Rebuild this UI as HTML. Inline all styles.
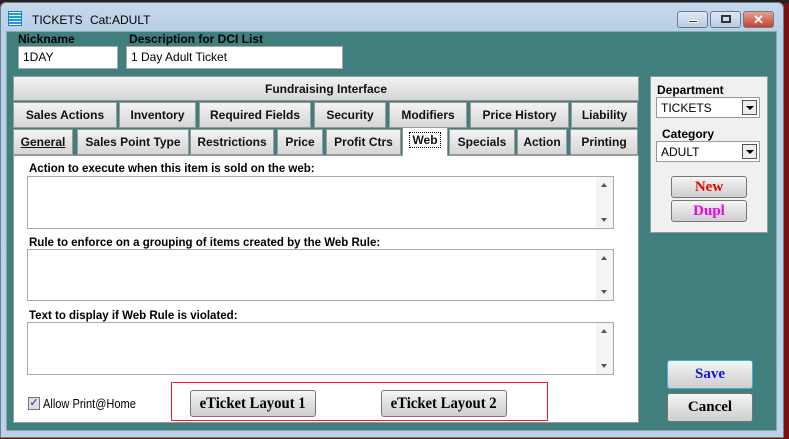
<!DOCTYPE html>
<html><head><style>
*{box-sizing:border-box;margin:0;padding:0}
body{width:789px;height:439px;overflow:hidden;background:#7a0f0f;font-family:"Liberation Sans",Arial,sans-serif;font-size:12px;position:relative}
.a{position:absolute}
#frame{left:0;top:2px;width:784px;height:436px;background:linear-gradient(#c6d8ec,#b8cfe6 30px,#bcd2e9);border:1px solid #6d7f95;border-radius:6px 6px 0 0}
#teal{left:6px;top:31px;width:771px;height:400px;background:#417e7e;border:1px solid #8aa}
.lbl{font-weight:bold;font-size:12px;color:#000}
.inp{background:#fff;border:1px solid #aaa;font-size:12px;padding:3px 4px}
.tab{position:absolute;height:26px;background:linear-gradient(#f4f4f4,#e4e4e4 50%,#d6d6d6);border:1px solid #9a9a9a;font-weight:bold;font-size:12px;text-align:center;line-height:24px;color:#111}
.ta{position:absolute;left:27px;width:587px;background:#fff;border:1px solid #aaa}
.ta .sb{position:absolute;right:0;top:0;bottom:0;width:17px;background:#f4f4f4}
.ta .sb:before{content:"";position:absolute;left:5px;top:6px;border:3px solid transparent;border-bottom:4px solid #555;border-top:0}
.ta .sb:after{content:"";position:absolute;left:5px;bottom:6px;border:3px solid transparent;border-top:4px solid #555;border-bottom:0}
.tl{position:absolute;left:29px;font-weight:bold;font-size:11.5px}
.btn{position:absolute;background:linear-gradient(#f6f6f6,#e0e0e0 50%,#cfcfcf);border:1px solid #777;border-radius:3px;font-family:"Liberation Serif",serif;font-weight:bold;text-align:center}
.btn span{display:inline-block;transform:scaleX(.92)}
.sel{position:absolute;left:656px;width:104px;height:21px;background:#fff;border:1px solid #999;font-size:12px;padding:3px 4px}
.sel i{position:absolute;right:2px;top:2px;width:15px;height:15px;border:1px solid #555;background:#eee}
.sel i:after{content:"";position:absolute;left:3px;top:5px;border:4px solid transparent;border-top:4px solid #000;border-bottom:0}
.wb{position:absolute;top:11px;width:31px;height:17px;border:1px solid #6a7b90;border-radius:3px;background:linear-gradient(#dde8f4,#b9cce2)}
</style></head><body>
<div class="a" style="left:0;top:0;width:789px;height:3px;background:#222"></div>
<div id="frame" class="a"></div>
<div class="a" style="left:8px;top:11px;width:14px;height:15px;background:repeating-linear-gradient(#fff 0 1px,#1aa0d8 1px 3px);border:1px solid #1a80c0"></div>
<div class="a" style="left:32px;top:13px;font-size:12px">TICKETS</div>
<div class="a" style="left:90px;top:13px;font-size:12px">Cat:ADULT</div>
<div class="wb" style="left:677px"><div class="a" style="left:10px;top:8px;width:10px;height:3px;background:#333;border:1px solid #fff"></div></div>
<div class="wb" style="left:710px"><div class="a" style="left:10px;top:3px;width:10px;height:8px;border:2px solid #333"></div></div>
<div class="wb" style="left:743px;background:linear-gradient(#e8a090,#c4422e);color:#fff;font-weight:bold;text-align:center;line-height:15px;font-size:13px">✕</div>
<div id="teal" class="a"></div>
<div class="a lbl" style="left:18px;top:32px">Nickname</div>
<div class="a lbl" style="left:129px;top:32px">Description for DCI List</div>
<div class="a inp" style="left:18px;top:46px;width:100px;height:23px">1DAY</div>
<div class="a inp" style="left:126px;top:46px;width:217px;height:23px">1 Day Adult Ticket</div>
<div class="tab" style="left:13px;top:76px;width:626px;height:25px">Fundraising Interface</div>
<div class="tab" style="left:13px;top:102px;width:104px">Sales Actions</div>
<div class="tab" style="left:119px;top:102px;width:77px">Inventory</div>
<div class="tab" style="left:199px;top:102px;width:112px">Required Fields</div>
<div class="tab" style="left:314px;top:102px;width:72px">Security</div>
<div class="tab" style="left:389px;top:102px;width:78px">Modifiers</div>
<div class="tab" style="left:470px;top:102px;width:99px">Price History</div>
<div class="tab" style="left:571px;top:102px;width:67px">Liability</div>
<div class="a" style="left:13px;top:155px;width:626px;height:268px;background:#fff;border:1px solid #999"></div>
<div class="tab" style="left:13px;top:129px;width:60px"><u>General</u></div>
<div class="tab" style="left:77px;top:129px;width:112px">Sales Point Type</div>
<div class="tab" style="left:190px;top:129px;width:84px">Restrictions</div>
<div class="tab" style="left:277px;top:129px;width:46px">Price</div>
<div class="tab" style="left:326px;top:129px;width:75px">Profit Ctrs</div>
<div class="tab" style="left:402px;top:127px;width:46px;height:29px;background:#fff;border-bottom:none"><span style="border:1px dotted #000;padding:0 2px">Web</span></div>
<div class="tab" style="left:449px;top:129px;width:66px">Specials</div>
<div class="tab" style="left:517px;top:129px;width:50px">Action</div>
<div class="tab" style="left:570px;top:129px;width:68px">Printing</div>
<div class="tl" style="top:163px">Action to execute when this item is sold on the web:</div>
<div class="ta" style="top:176px;height:53px"><div class="sb"></div></div>
<div class="tl" style="top:237px">Rule to enforce on a grouping of items created by the Web Rule:</div>
<div class="ta" style="top:249px;height:52px"><div class="sb"></div></div>
<div class="tl" style="top:310px">Text to display if Web Rule is violated:</div>
<div class="ta" style="top:322px;height:53px"><div class="sb"></div></div>
<div class="a" style="left:28px;top:397px;width:12px;height:13px;border:1px solid #777;background:#dde;font-size:11px;line-height:11px;color:#235;text-align:center">✓</div>
<div class="a" style="left:43px;top:396px;font-size:13px;transform:scaleX(.85);transform-origin:left">Allow Print@Home</div>
<div class="a" style="left:171px;top:382px;width:377px;height:39px;border:1px solid #e22"></div>
<div class="btn" style="left:190px;top:390px;width:126px;height:27px;font-size:16px;line-height:25px"><span>eTicket Layout 1</span></div>
<div class="btn" style="left:381px;top:390px;width:126px;height:27px;font-size:16px;line-height:25px"><span>eTicket Layout 2</span></div>
<div class="a" style="left:650px;top:76px;width:118px;height:157px;background:#f0f0f0;border:1px solid #999"></div>
<div class="a lbl" style="left:657px;top:83px">Department</div>
<div class="sel" style="top:97px">TICKETS<i></i></div>
<div class="a lbl" style="left:662px;top:127px">Category</div>
<div class="sel" style="top:141px">ADULT<i></i></div>
<div class="btn" style="left:671px;top:176px;width:76px;height:22px;color:#e00;font-size:15px;line-height:20px">New</div>
<div class="btn" style="left:671px;top:200px;width:76px;height:22px;color:#e0e;font-size:15px;line-height:20px">Dupl</div>
<div class="btn" style="left:667px;top:360px;width:86px;height:29px;color:#11d;font-size:15px;line-height:27px;border-color:#3ab0e0">Save</div>
<div class="btn" style="left:667px;top:393px;width:86px;height:29px;color:#000;font-size:15px;line-height:27px">Cancel</div>
</body></html>
